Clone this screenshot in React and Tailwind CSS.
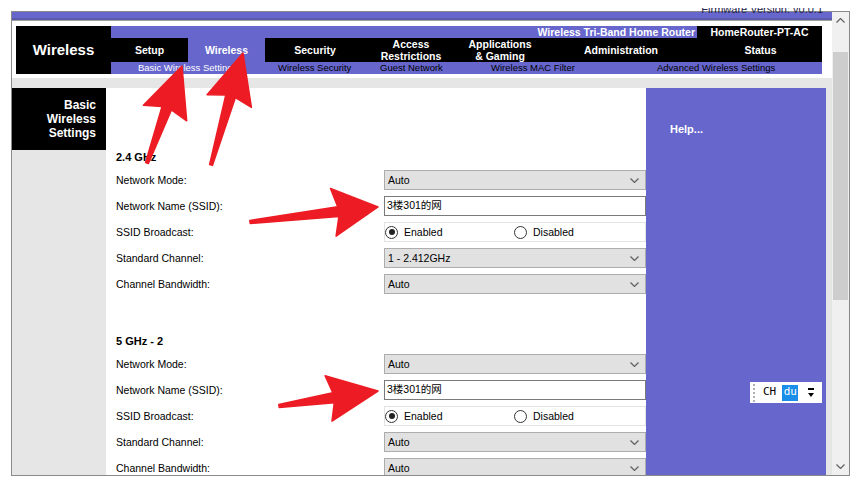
import React from 'react'

const SANS = "font-['Liberation_Sans',Arial,sans-serif]"

function arrowPoints(x1, y1, x2, y2, h = 50, w = 23, neck = 5, n = 5, t = 1.5) {
  const dx = x2 - x1
  const dy = y2 - y1
  const L = Math.hypot(dx, dy)
  const ux = dx / L
  const uy = dy / L
  const px = -uy
  const py = ux
  const P = (a, b) => `${(x1 + ux * a + px * b).toFixed(1)},${(y1 + uy * a + py * b).toFixed(1)}`
  return [
    P(0, -t),
    P(L - h + neck, -n),
    P(L - h, -w),
    P(L, 0),
    P(L - h, w),
    P(L - h + neck, n),
    P(0, t),
  ].join(' ')
}

function Chevron({ up = false, color = '#606060' }) {
  return (
    <svg width="9" height="5" viewBox="0 0 9 5">
      <path
        d={up ? 'M0.5 4.5 L4.5 0.5 L8.5 4.5' : 'M0.5 0.5 L4.5 4.5 L8.5 0.5'}
        fill="none"
        stroke={color}
        strokeWidth="1.2"
      />
    </svg>
  )
}

function Select({ value }) {
  return (
    <div className="flex h-[20px] w-full items-center justify-between border border-[#adadad] bg-[#e1e1e1] pl-[3px] pr-[6px] text-[10.5px] text-black">
      <span className="pt-[1px]">{value}</span>
      <Chevron />
    </div>
  )
}

function Radio({ checked, label }) {
  return (
    <div className="flex items-center gap-[6px]">
      <span className="flex h-[13px] w-[13px] items-center justify-center rounded-full border border-[#333] bg-white">
        {checked && <span className="h-[6px] w-[6px] rounded-full bg-[#222]" />}
      </span>
      <span className="pt-[1px]">{label}</span>
    </div>
  )
}

function Row({ label, children }) {
  return (
    <div className="flex h-[26px] items-center">
      <div className="w-[268px] pt-[2px] text-[10.5px] text-black">{label}</div>
      <div className="w-[262px]">{children}</div>
    </div>
  )
}

function Band({ title, channel }) {
  return (
    <div>
      <div className="h-[17px] text-[11px] font-bold leading-[14px] text-black">{title}</div>
      <Row label="Network Mode:">
        <Select value="Auto" />
      </Row>
      <Row label="Network Name (SSID):">
        <div className="flex h-[20px] items-center border border-[#7a7a7a] bg-white pl-[2px] font-['Liberation_Sans','Noto_Sans_CJK_SC',sans-serif] text-[10.5px] text-black">
          3楼301的网
        </div>
      </Row>
      <Row label="SSID Broadcast:">
        <div className="flex h-[20px] items-center border border-[#e3e3e3] bg-white text-[10.5px] text-black">
          <div className="w-[129px]">
            <Radio checked label="Enabled" />
          </div>
          <Radio label="Disabled" />
        </div>
      </Row>
      <Row label="Standard Channel:">
        <Select value={channel} />
      </Row>
      <Row label="Channel Bandwidth:">
        <Select value="Auto" />
      </Row>
    </div>
  )
}

const tabs = [
  { label: ['Setup'], w: 'w-[77px]', active: false },
  { label: ['Wireless'], w: 'w-[77px]', active: true },
  { label: ['Security'], w: 'w-[100px]' },
  { label: ['Access', 'Restrictions'], w: 'w-[92px]' },
  { label: ['Applications', '& Gaming'], w: 'w-[86px]' },
  { label: ['Administration'], w: 'w-[156px]' },
  { label: ['Status'], w: 'w-[123px]' },
]

const subTabs = [
  { label: 'Basic Wireless Settings', w: 'w-[140px]', active: true },
  { label: 'Wireless Security', w: 'w-[102px]' },
  { label: 'Guest Network', w: 'w-[111px]' },
  { label: 'Wireless MAC Filter', w: 'w-[166px]' },
  { label: 'Advanced Wireless Settings', w: 'w-[130px]' },
]

export default function App() {
  return (
    <div className={`relative flex h-[487px] w-[861px] flex-col overflow-hidden bg-white ${SANS}`}>
      <div className="relative z-10 h-[8px] shrink-0 bg-white" />
      <div className="h-[3px] shrink-0" />

      {/* browser frame */}
      <div className="ml-[11px] flex h-[465px] w-[839px] shrink-0 border border-[#8a8a8a]">
        {/* page */}
        <div className="flex w-[820px] flex-col">
          <div className="flex h-[9px] shrink-0 flex-col">
            <div className="flex h-[6px] justify-end bg-[#6666cc] pr-[9px]">
              <span className="-mt-[8px] block text-[11px] leading-[11px] text-[#23234a]">
                Firmware Version: v0.0.1
              </span>
            </div>
            <div className="h-[2px] bg-[#5a5aa8]" />
            <div className="h-[1px] bg-[#a0a0a0]" />
          </div>
          <div className="h-[5px] shrink-0" />

          {/* header */}
          <div className="ml-[4px] flex h-[48px] w-[806px] shrink-0 text-white">
            <div className="flex w-[95px] items-center justify-center bg-black text-[15px] font-bold">
              Wireless
            </div>
            <div className="flex flex-1 flex-col">
              <div className="flex h-[12px] text-[10.5px] font-bold leading-[12px]">
                <div className="flex-1 bg-[#6666cc] pr-[2px] text-right">Wireless Tri-Band Home Router</div>
                <div className="w-[125px] bg-black text-center">HomeRouter-PT-AC</div>
              </div>
              <div className="flex h-[24px] text-[10.5px] font-bold leading-[12px]">
                {tabs.map((t) => (
                  <div
                    key={t.label[0]}
                    className={`flex ${t.w} flex-col items-center justify-center ${t.active ? 'bg-[#6666cc]' : 'bg-black'}`}
                  >
                    {t.label.map((l) => (
                      <span key={l}>{l}</span>
                    ))}
                  </div>
                ))}
              </div>
              <div className="flex h-[12px] items-center bg-[#6666cc] pl-[27px] text-[9.5px] leading-[12px]">
                {subTabs.map((s) => (
                  <span key={s.label} className={`${s.w} whitespace-nowrap ${s.active ? 'text-white' : 'text-black'}`}>
                    {s.label}
                  </span>
                ))}
              </div>
            </div>
          </div>

          <div className="h-[4px] shrink-0" />
          <div className="h-[10px] shrink-0 bg-[#e6e6e6]" />

          {/* body */}
          <div className="flex flex-1 overflow-hidden">
            <div className="w-[94px] bg-[#e6e6e6]">
              <div className="h-[62px] bg-black pr-[10px] pt-[10px] text-right text-[12px] font-bold leading-[14px] text-white">
                Basic
                <br />
                Wireless
                <br />
                Settings
              </div>
            </div>
            <div className="w-[540px] bg-white pl-[10px] pt-[62px]">
              <Band title="2.4 GHz" channel="1 - 2.412GHz" />
              <div className="h-[37px]" />
              <Band title="5 GHz - 2" channel="Auto" />
            </div>
            <div className="w-[180px] bg-[#6666cc] pl-[24px] pt-[33px] text-[11px] font-bold text-white">
              Help...
            </div>
            <div className="w-[6px] bg-[#e6e6e6]" />
          </div>
        </div>

        {/* scrollbar */}
        <div className="flex w-[17px] flex-col bg-[#f0f0f0]">
          <div className="flex h-[17px] items-center justify-center">
            <Chevron up />
          </div>
          <div className="flex flex-1 flex-col">
            <div className="h-[23px]" />
            <div className="ml-[1px] h-[248px] w-[15px] bg-[#cdcdcd]" />
          </div>
          <div className="flex h-[17px] items-center justify-center">
            <Chevron />
          </div>
        </div>
      </div>

      {/* IME widget */}
      <div className="absolute left-[750px] top-[382px] flex h-[21px] w-[72px] items-center bg-white">
        <div className="ml-[3px] h-[18px] w-[2px] border-l-2 border-dotted border-[#b0b0b0]" />
        <span className="ml-[8px] font-['DejaVu_Sans_Mono',monospace] text-[11px] text-black">CH</span>
        <span className="ml-[6px] flex h-[16px] w-[16px] items-center justify-center bg-[#1a8ee8] font-['DejaVu_Sans_Mono',monospace] text-[11px] text-white">
          du
        </span>
        <div className="ml-[10px] flex flex-col items-center gap-[3px]">
          <span className="h-[2px] w-[6px] bg-black" />
          <span className="h-0 w-0 border-x-[3px] border-t-[4px] border-x-transparent border-t-black" />
        </div>
      </div>

      {/* red annotation arrows */}
      <svg className="pointer-events-none absolute left-0 top-0" width="861" height="487" viewBox="0 0 861 487">
        <g fill="#ed1c24" stroke="#ed1c24" strokeWidth="1.5" strokeLinejoin="round">
          <polygon points={arrowPoints(147, 163, 182, 66)} />
          <polygon points={arrowPoints(211, 165, 243, 53)} />
          <polygon points={arrowPoints(250, 222, 378, 207, 45, 24)} />
          <polygon points={arrowPoints(279, 406, 378, 391)} />
        </g>
      </svg>
    </div>
  )
}
